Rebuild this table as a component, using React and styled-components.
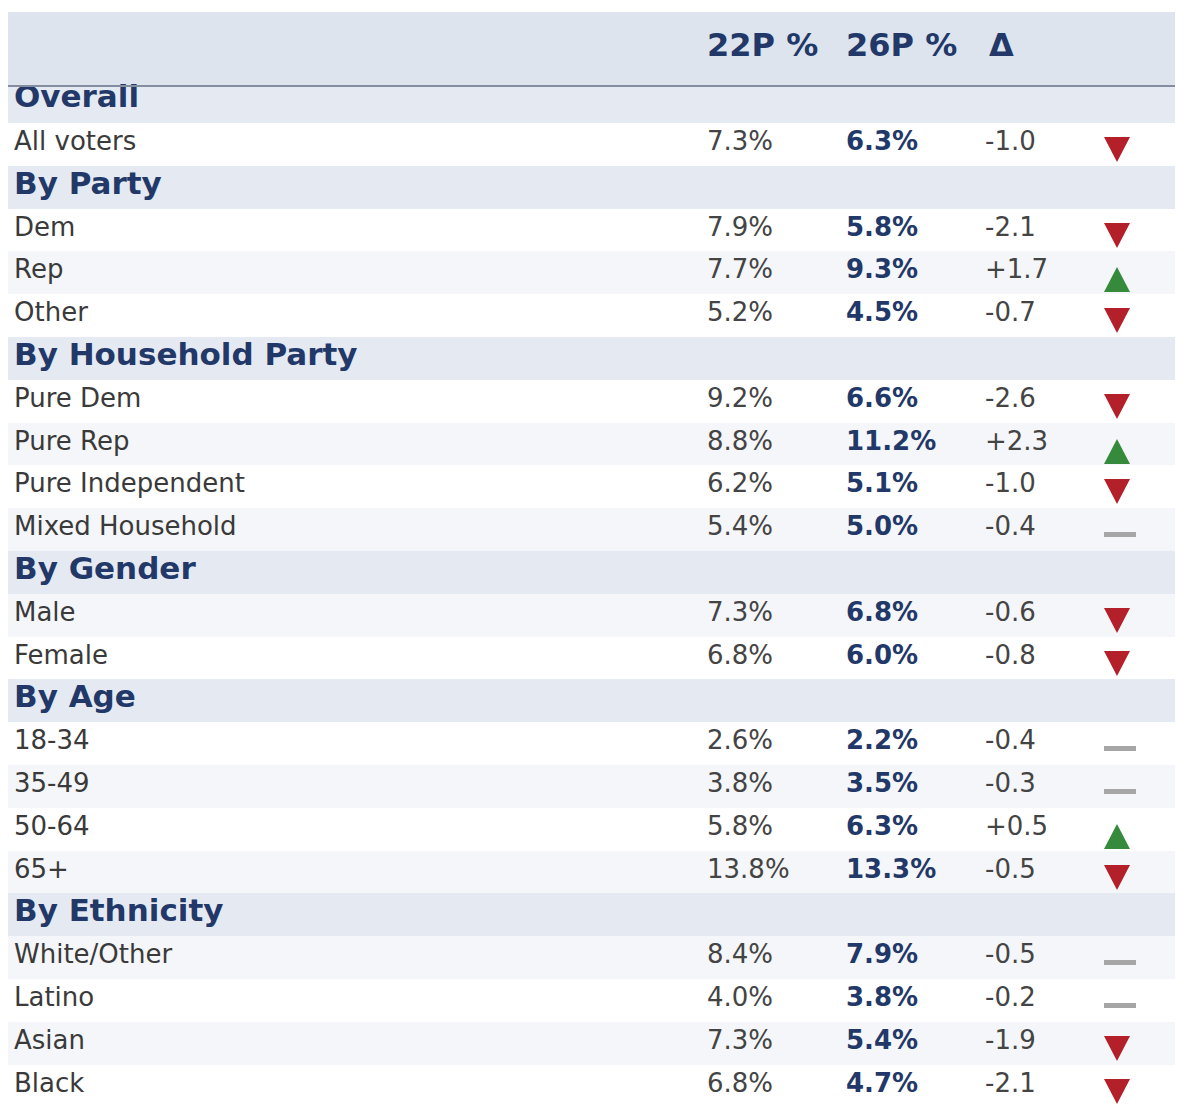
import React from "react";
import styled, { createGlobalStyle } from "styled-components";

const GlobalStyle = createGlobalStyle`
  html, body {
    margin: 0;
    padding: 0;
    background: #ffffff;
  }
  body {
    font-family: "DejaVu Sans", Verdana, sans-serif;
  }
`

const sections = [
  {
    title: "Overall",
    rows: [{ label: "All voters", p22: "7.3%", p26: "6.3%", delta: "-1.0", trend: "down", shade: false }],
  },
  {
    title: "By Party",
    rows: [
      { label: "Dem", p22: "7.9%", p26: "5.8%", delta: "-2.1", trend: "down", shade: false },
      { label: "Rep", p22: "7.7%", p26: "9.3%", delta: "+1.7", trend: "up", shade: true },
      { label: "Other", p22: "5.2%", p26: "4.5%", delta: "-0.7", trend: "down", shade: false },
    ],
  },
  {
    title: "By Household Party",
    rows: [
      { label: "Pure Dem", p22: "9.2%", p26: "6.6%", delta: "-2.6", trend: "down", shade: false },
      { label: "Pure Rep", p22: "8.8%", p26: "11.2%", delta: "+2.3", trend: "up", shade: true },
      { label: "Pure Independent", p22: "6.2%", p26: "5.1%", delta: "-1.0", trend: "down", shade: false },
      { label: "Mixed Household", p22: "5.4%", p26: "5.0%", delta: "-0.4", trend: "flat", shade: true },
    ],
  },
  {
    title: "By Gender",
    rows: [
      { label: "Male", p22: "7.3%", p26: "6.8%", delta: "-0.6", trend: "down", shade: true },
      { label: "Female", p22: "6.8%", p26: "6.0%", delta: "-0.8", trend: "down", shade: false },
    ],
  },
  {
    title: "By Age",
    rows: [
      { label: "18-34", p22: "2.6%", p26: "2.2%", delta: "-0.4", trend: "flat", shade: false },
      { label: "35-49", p22: "3.8%", p26: "3.5%", delta: "-0.3", trend: "flat", shade: true },
      { label: "50-64", p22: "5.8%", p26: "6.3%", delta: "+0.5", trend: "up", shade: false },
      { label: "65+", p22: "13.8%", p26: "13.3%", delta: "-0.5", trend: "down", shade: true },
    ],
  },
  {
    title: "By Ethnicity",
    rows: [
      { label: "White/Other", p22: "8.4%", p26: "7.9%", delta: "-0.5", trend: "flat", shade: true },
      { label: "Latino", p22: "4.0%", p26: "3.8%", delta: "-0.2", trend: "flat", shade: false },
      { label: "Asian", p22: "7.3%", p26: "5.4%", delta: "-1.9", trend: "down", shade: true },
      { label: "Black", p22: "6.8%", p26: "4.7%", delta: "-2.1", trend: "down", shade: false },
    ],
  },
]

function TrendIcon({ trend }) {
  if (trend === "flat") return <Dash />
  return (
    <Arrow viewBox="0 0 26 25" $trend={trend}>
      {trend === "up"
        ? <polygon points="13,0 26,25 0,25" />
        : <polygon points="0,0 26,0 13,25" />}
    </Arrow>
  )
}

function TurnoutTable() {
  return (
    <Table>
      <HeaderRow>
        <span />
        <HeadCell>22P %</HeadCell>
        <HeadCell>26P %</HeadCell>
        <HeadCell $delta>Δ</HeadCell>
        <span />
      </HeaderRow>
      {sections.map((section, i) => (
        <React.Fragment key={section.title}>
          <SectionRow $first={i === 0}>
            <SectionTitle $first={i === 0}>{section.title}</SectionTitle>
          </SectionRow>
          {section.rows.map(row => (
            <DataRow key={row.label} $shade={row.shade}>
              <Label>{row.label}</Label>
              <Value>{row.p22}</Value>
              <Value $bold>{row.p26}</Value>
              <Value>{row.delta}</Value>
              <IconCell $trend={row.trend}>
                <TrendIcon trend={row.trend} />
              </IconCell>
            </DataRow>
          ))}
        </React.Fragment>
      ))}
    </Table>
  )
}

export default function App() {
  return (
    <>
      <GlobalStyle />
      <Page>
        <TurnoutTable />
      </Page>
    </>
  )
}

const Page = styled.div`
  width: 1200px;
  height: 1104px;
  overflow: hidden;
  background: #ffffff;
  padding: 12px 0 0 8px;
  box-sizing: border-box;
`

const Table = styled.div`
  width: 1167px;
  display: flex;
  flex-direction: column;
`

const gridCols = `
  display: grid;
  grid-template-columns: 693px 139px 139px 115px 75px;
  padding-left: 6px;
  box-sizing: border-box;
`

const HeaderRow = styled.div`
  ${gridCols}
  height: 73px;
  background: #dde4ee;
  align-items: start;
  padding-top: 14px;
`

const HeadCell = styled.span`
  font-size: 32px;
  font-weight: bold;
  color: #223868;
  white-space: nowrap;
  margin-left: ${p => (p.$delta ? "4px" : "0")};
`

const SectionRow = styled.div`
  position: relative;
  height: ${p => (p.$first ? "38px" : "42.8px")};
  background: #e5eaf2;
  padding-left: 6px;
  display: flex;
  align-items: flex-start;

  ${p => p.$first && `
    &::before {
      content: "";
      position: absolute;
      left: 0;
      right: 0;
      top: 0;
      height: 2px;
      background: #858ea0;
      z-index: 1;
    }
  `}
`

const SectionTitle = styled.span`
  font-size: 31px;
  font-weight: bold;
  color: #223868;
  line-height: 36px;
  margin-top: ${p => (p.$first ? "-7px" : "-1px")};
`

const DataRow = styled.div`
  ${gridCols}
  height: 42.8px;
  background: ${p => (p.$shade ? "#f4f6f9" : "#ffffff")};
  align-items: start;
`

const Label = styled.span`
  font-size: 26px;
  line-height: 36px;
  color: #3a3a3a;
  white-space: nowrap;
`

const Value = styled.span`
  font-size: 26px;
  line-height: 36px;
  color: ${p => (p.$bold ? "#223868" : "#444444")};
  font-weight: ${p => (p.$bold ? "bold" : "normal")};
  white-space: nowrap;
`

const IconCell = styled.div`
  display: flex;
  padding-left: 4px;
  padding-top: ${p => (p.$trend === "flat" ? "24px" : p.$trend === "up" ? "16px" : "14px")};
`

const Arrow = styled.svg`
  width: 26px;
  height: 25px;
  fill: ${p => (p.$trend === "up" ? "#358a3c" : "#b3202a")};
`

const Dash = styled.div`
  width: 32px;
  height: 5px;
  background: #a6a6a6;
`
